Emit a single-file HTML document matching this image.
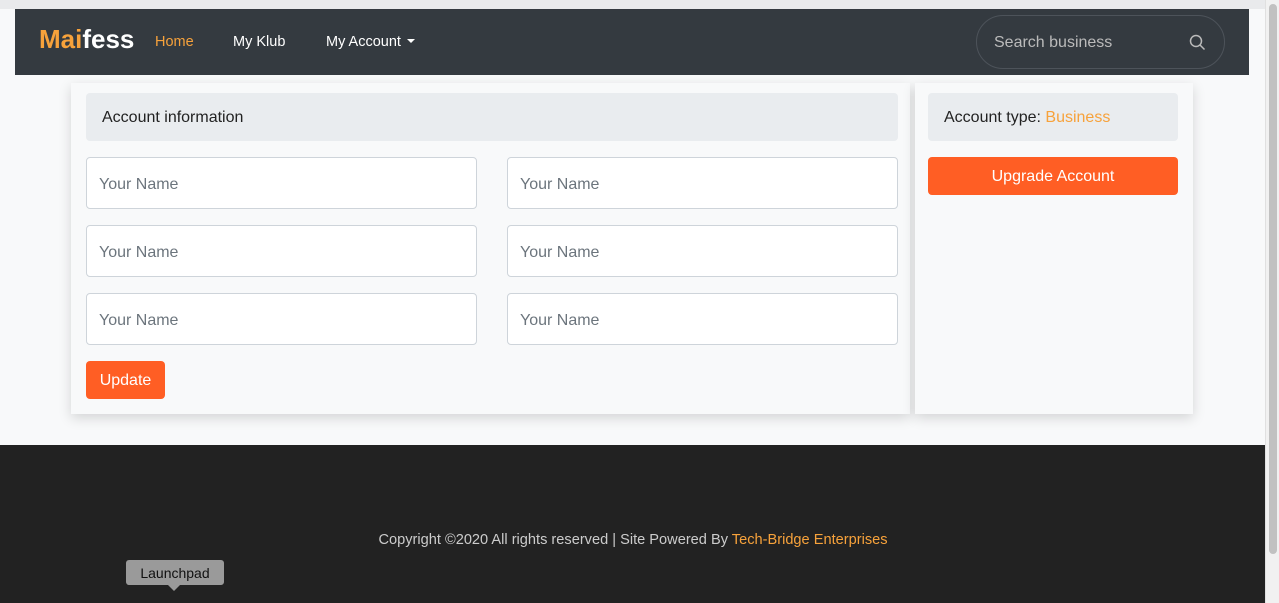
<!DOCTYPE html>
<html><head><meta charset="utf-8"><style>
*{box-sizing:border-box;margin:0;padding:0}
body{width:1279px;height:603px;overflow:hidden;background:#f8f9fa;font-family:"Liberation Sans",sans-serif;position:relative}
.top{position:absolute;left:0;top:0;width:1265px;height:9px;background:#e9eaec}
.sb{position:absolute;left:1265px;top:0;width:14px;height:603px;background:#f1f1f1;border-left:1px solid #e0e0e0}
.sb div{position:absolute;left:3px;top:4px;width:8px;height:550px;background:#c1c1c1;border-radius:4px}
nav{position:absolute;left:15px;top:9px;width:1234px;height:66px;background:#343a40}
.logo{position:absolute;left:24px;top:15px;font-size:26px;font-weight:bold;color:#fff}
.logo span{color:#f7a23b}
.nl{position:absolute;top:25px;font-size:14.5px;color:#fff}
.caret{display:inline-block;width:0;height:0;border:4px solid transparent;border-top:4px solid #fff;border-bottom:0;margin-left:6px;vertical-align:3px}
.search{position:absolute;left:961px;top:6px;width:249px;height:54px;border:1px solid #4d535a;border-radius:27px;color:#bbb;font-size:16px;padding:18px 0 0 17px}
.card{position:absolute;background:#f8f9fa;box-shadow:0 4px 12px rgba(0,0,0,.15)}
.hd{position:absolute;background:#e9ecef;border-radius:4px;font-size:16px;color:#222;padding:16px 16px}
.in{position:absolute;width:391px;height:52px;background:#fff;border:1px solid #ced4da;border-radius:4px;font-size:16px;color:#6c757d;padding:18px 12px}
.btn{position:absolute;background:#ff5e24;color:#fff;font-size:16px;border-radius:4px;text-align:center}
footer{position:absolute;left:0;top:445px;width:1265px;height:158px;background:#222}
.copy{position:absolute;top:87px;width:100%;text-align:center;font-size:14.6px;color:#ccc;padding-left:1px}
.copy span{color:#f7a23b}
.tip{position:absolute;left:126px;top:560px;width:98px;height:25px;background:#9a9a9a;border-radius:3px;font-size:14px;color:#111;text-align:center;line-height:26px}
.tip:after{content:"";position:absolute;left:42px;top:25px;border:6px solid transparent;border-top-color:#9a9a9a;border-bottom:0}
</style></head><body>
<div class="top"></div>
<nav>
<div class="logo"><span>Mai</span>fess</div>
<div class="nl" style="left:140px;color:#f7a23b">Home</div>
<div class="nl" style="left:218px">My Klub</div>
<div class="nl" style="left:311px">My Account<span class="caret"></span></div>
<div class="search">Search business
<svg style="position:absolute;left:212px;top:18px" width="17" height="17" viewBox="0 0 17 17" fill="none" stroke="#bbb" stroke-width="1.5"><circle cx="7" cy="7" r="5.5"/><path d="M11 11l4.5 4.5"/></svg></div>
</nav>
<div class="card" style="left:71px;top:83px;width:839px;height:331px"></div>
<div class="card" style="left:915px;top:83px;width:278px;height:331px"></div>
<div class="hd" style="left:86px;top:93px;width:812px;height:48px">Account information</div>
<div class="in" style="left:86px;top:157px">Your Name</div>
<div class="in" style="left:507px;top:157px">Your Name</div>
<div class="in" style="left:86px;top:225px">Your Name</div>
<div class="in" style="left:507px;top:225px">Your Name</div>
<div class="in" style="left:86px;top:293px">Your Name</div>
<div class="in" style="left:507px;top:293px">Your Name</div>
<div class="btn" style="left:86px;top:361px;width:79px;height:38px;line-height:40px">Update</div>
<div class="hd" style="left:928px;top:93px;width:250px;height:48px">Account type: <span style="color:#f7a23b">Business</span></div>
<div class="btn" style="left:928px;top:157px;width:250px;height:38px;line-height:40px">Upgrade Account</div>
<footer><div class="copy">Copyright ©2020 All rights reserved | Site Powered By <span>Tech-Bridge Enterprises</span></div></footer>
<div class="tip">Launchpad</div>
<div class="sb"><div></div></div>
</body></html>
